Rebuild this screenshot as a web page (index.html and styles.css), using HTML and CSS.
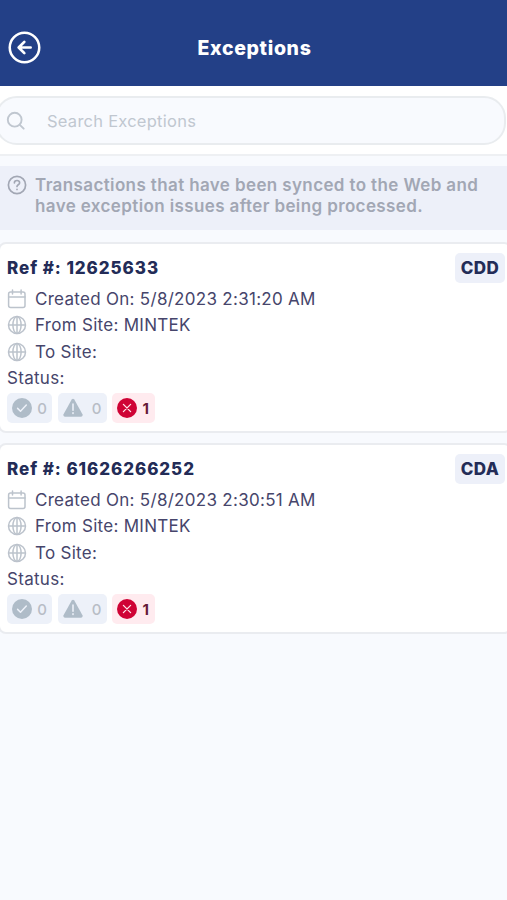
FILE: index.html
```html
<!DOCTYPE html>
<html lang="en">
<head>
<meta charset="utf-8">
<title>Exceptions</title>
<link rel="stylesheet" href="styles.css">
</head>
<body>
<svg class="defs" width="0" height="0" aria-hidden="true">
  <symbol id="calendar" viewBox="0 0 20 20"><g fill="none" stroke="currentColor" stroke-width="1.5" stroke-linecap="round"><rect x="1.6" y="3" width="16.4" height="15.6" rx="2"/><path d="M1.6 8h16.4M5.5 1v4M14.1 1v4"/></g></symbol>
  <symbol id="globe" viewBox="0 0 20 20"><g fill="none" stroke="currentColor" stroke-width="1.5"><circle cx="10" cy="10" r="8.5"/><ellipse cx="10" cy="10" rx="4.1" ry="8.5"/><path d="M1.5 10h17M10 1.5v17"/></g></symbol>
  <symbol id="check" viewBox="0 0 20 20"><circle cx="10" cy="10" r="10" fill="currentColor"/><path d="M5.6 10.4l2.9 2.9 5.8-6.2" fill="none" stroke="#edf1f9" stroke-width="1.5" stroke-linecap="round" stroke-linejoin="round"/></symbol>
  <symbol id="warn" viewBox="0 0 20 20"><path d="M8.7 1.6Q10 0 11.3 1.6L19.6 16.6Q20 18.5 18.2 18.8H1.8Q0 18.5.4 16.6z" fill="currentColor"/><path d="M10 6v6.2M10 14.8v.7" stroke="#edf1f9" stroke-width="1.6" stroke-linecap="round"/></symbol>
  <symbol id="fail" viewBox="0 0 20 20"><circle cx="10" cy="10" r="10" fill="currentColor"/><path d="M6.4 6.4l7.2 7.2M13.6 6.4l-7.2 7.2" stroke="#ffe6eb" stroke-width="1.3" stroke-linecap="round"/></symbol>
</svg>
<header class="topbar">
  <svg class="back" viewBox="0 0 34 34" fill="none" stroke="#fff" stroke-linecap="round" stroke-linejoin="round"><circle cx="17" cy="17" r="15.2" stroke-width="2.6"/><path d="M23.3 17H11.2M16.8 11.2L11 17l5.8 5.8" stroke-width="2.8"/></svg>
  <h1 class="title">Exceptions</h1>
</header>
<div class="search-area">
  <div class="search">
    <svg class="search-icon" viewBox="0 0 20 20" fill="none" stroke="currentColor" stroke-width="1.9" stroke-linecap="round"><circle cx="8.7" cy="8.7" r="6.9"/><path d="M13.8 13.8l3.9 3.9"/></svg>
    <span class="placeholder">Search Exceptions</span>
  </div>
</div>
<div class="notice">
  <svg class="notice-icon" viewBox="0 0 20 20" fill="none" stroke="currentColor" stroke-width="1.7" stroke-linecap="round"><circle cx="10" cy="10" r="8.6"/><path d="M7.4 7.8C7.4 4.6 12.8 4.8 12.6 8c-.1 1.7-2.6 1.9-2.6 3.5M10 14.3v.2"/></svg>
  <p class="notice-text">Transactions that have been synced to the Web and<br>have exception issues after being processed.</p>
</div>
<main class="list">
  <article class="card">
    <div class="card-head"><h2 class="ref">Ref #: 12625633</h2><span class="tag">CDD</span></div>
    <div class="row"><svg class="icon"><use href="#calendar"/></svg><span>Created On: 5/8/2023 2:31:20 AM</span></div>
    <div class="row"><svg class="icon"><use href="#globe"/></svg><span>From Site: MINTEK</span></div>
    <div class="row"><svg class="icon"><use href="#globe"/></svg><span>To Site:</span></div>
    <div class="row">Status:</div>
    <div class="badges">
      <span class="badge"><svg class="icon"><use href="#check"/></svg>0</span>
      <span class="badge wide"><svg class="icon"><use href="#warn"/></svg>0</span>
      <span class="badge error"><svg class="icon"><use href="#fail"/></svg><b class="count">1</b></span>
    </div>
  </article>
  <article class="card">
    <div class="card-head"><h2 class="ref">Ref #: 61626266252</h2><span class="tag">CDA</span></div>
    <div class="row"><svg class="icon"><use href="#calendar"/></svg><span>Created On: 5/8/2023 2:30:51 AM</span></div>
    <div class="row"><svg class="icon"><use href="#globe"/></svg><span>From Site: MINTEK</span></div>
    <div class="row"><svg class="icon"><use href="#globe"/></svg><span>To Site:</span></div>
    <div class="row">Status:</div>
    <div class="badges">
      <span class="badge"><svg class="icon"><use href="#check"/></svg>0</span>
      <span class="badge wide"><svg class="icon"><use href="#warn"/></svg>0</span>
      <span class="badge error"><svg class="icon"><use href="#fail"/></svg><b class="count">1</b></span>
    </div>
  </article>
</main>
</body>
</html>
```
FILE: styles.css
```css
* { box-sizing: border-box; }
body {
  margin: 0;
  min-height: 900px;
  overflow: hidden;
  background: #f8fafe;
  color: #46456b;
  font-family: Inter, "Liberation Sans", sans-serif;
  font-size: 17px;
}
svg { display: block; flex: none; }
.defs { position: absolute; }
.topbar {
  display: grid;
  grid-template-columns: 34px 1fr 32px;
  align-items: center;
  height: 86px;
  padding: 9px 8px 0;
  background: #234087;
}
.back { width: 33px; height: 33px; }
.title {
  margin: 0;
  text-align: center;
  color: #fff;
  font-size: 19.5px;
  font-weight: 800;
  letter-spacing: .65px;
}
.search-area {
  height: 70px;
  padding-top: 10px;
  background: #fff;
  border-bottom: 2px solid #eef0f3;
}
.search {
  display: flex;
  align-items: center;
  gap: 21px;
  height: 49px;
  margin: 0 1px 0 -5px;
  padding-left: 9px;
  background: #f8fafe;
  border: 2px solid #e9ecef;
  border-radius: 22px;
  color: #c0c7d0;
}
.search-icon { width: 20px; height: 20px; }
.placeholder { font-size: 16.5px; letter-spacing: .25px; }
.notice {
  display: flex;
  gap: 8px;
  height: 64px;
  margin-top: 10px;
  padding: 9px 7px 0;
  background: #edf0f9;
  color: #a2a7b4;
}
.notice-icon { width: 20px; height: 20px; }
.notice-text {
  margin: 0;
  font-weight: 600;
  line-height: 21px;
  letter-spacing: .38px;
  white-space: nowrap;
}
.list {
  display: flex;
  flex-direction: column;
  gap: 10px;
  margin-top: 12px;
}
.card {
  height: 191px;
  margin: 0 -5px 0 -2px;
  padding: 8px 6px 0 7px;
  background: #fff;
  border: 2px solid #eaecf0;
  border-radius: 8px;
}
.card-head {
  display: flex;
  justify-content: space-between;
  align-items: center;
  height: 31px;
  margin-bottom: 3px;
}
.ref {
  margin: 0;
  color: #232c57;
  font-size: 17px;
  font-weight: 800;
  letter-spacing: .94px;
}
.tag {
  width: 50px;
  height: 30px;
  margin-right: -1px;
  line-height: 30px;
  text-align: center;
  background: #edf0f9;
  border-radius: 5px;
  color: #232c57;
  font-weight: 800;
  letter-spacing: .4px;
}
.row {
  display: flex;
  align-items: center;
  gap: 8px;
  height: 26.3px;
  letter-spacing: .29px;
}
.icon { width: 20px; height: 20px; color: #bcc3cc; }
.badges { display: flex; gap: 5.5px; margin-top: 2px; }
.badge {
  display: flex;
  align-items: center;
  justify-content: space-between;
  width: 45px;
  height: 30px;
  padding: 0 5px;
  background: #edf1f9;
  border-radius: 5px;
  color: #b8bdc6;
  font-size: 15px;
  font-weight: 500;
}
.badge .icon { color: #afbcc8; }
.wide { width: 49px; }
.error { width: 43px; padding: 0 6px 0 5px; background: #ffebef; }
.error .icon { color: #cf0335; }
.count { color: #651a38; font-weight: 700; }
```
